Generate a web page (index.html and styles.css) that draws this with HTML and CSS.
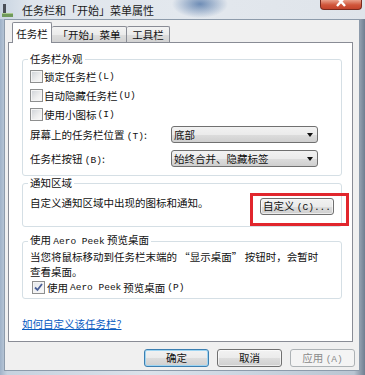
FILE: index.html
```html
<!DOCTYPE html>
<html lang="zh-CN">
<head>
  <meta charset="UTF-8" />
  <title>任务栏和「开始」菜单属性</title>
  <link rel="stylesheet" href="styles.css">
</head>
<body>

<div class="window">
  <div class="titlebar">
    <svg class="app-icon" width="11" height="13" viewBox="0 0 11 13">
      <rect x="1" y="0" width="3" height="10" fill="#4a4f57" />
      <rect x="0" y="9" width="11" height="4" fill="#6f9a5a" />
      <rect x="0" y="9" width="11" height="1" fill="#a9c98f" />
    </svg>
    <span class="title">任务栏和「开始」菜单属性</span>
    <div class="close">
      <svg width="42" height="10" viewBox="0 0 42 10">
        <path d="M17 -3 L25 6 M25 -3 L17 6" stroke="#fff" stroke-width="2.4" />
      </svg>
    </div>
  </div>

  <div class="client">
    <div class="tabs">
      <div class="tab active">任务栏</div>
      <div class="tab wide">「开始」菜单</div>
      <div class="tab last">工具栏</div>
    </div>

    <div class="panel">
      <fieldset class="group g1">
        <legend>任务栏外观</legend>
        <div class="check"><span class="cb"></span>锁定任务栏 <span class="lat">(L)</span></div>
        <div class="check"><span class="cb"></span>自动隐藏任务栏 <span class="lat">(U)</span></div>
        <div class="check"><span class="cb"></span>使用小图标 <span class="lat">(I)</span></div>
        <div class="field first">
          <span class="field-label">屏幕上的任务栏位置 <span class="lat">(T)</span>:</span>
          <div class="combo">底部<span class="arrow"></span></div>
        </div>
        <div class="field second">
          <span class="field-label">任务栏按钮 <span class="lat">(B)</span>:</span>
          <div class="combo">始终合并、隐藏标签<span class="arrow"></span></div>
        </div>
      </fieldset>

      <fieldset class="group g2">
        <legend>通知区域</legend>
        <div class="notify-row">
          <span class="notify-text">自定义通知区域中出现的图标和通知。</span>
          <div class="btn-wrap">
            <div class="btn custom">自定义 <span class="lat">(C)...</span></div>
            <div class="highlight"></div>
          </div>
        </div>
      </fieldset>

      <fieldset class="group g3">
        <legend>使用 <span class="lat">Aero Peek</span> 预览桌面</legend>
        <p class="peek-text">当您将鼠标移动到任务栏末端的 “显示桌面” 按钮时，会暂时<br>查看桌面。</p>
        <div class="check peek"><span class="cb checked">
          <svg width="11" height="11" viewBox="0 0 11 11"><path d="M2 5.5 L4.5 8 L9 2" fill="none" stroke="#4a5f97" stroke-width="1.8" /></svg>
        </span>使用 <span class="lat">Aero Peek</span> 预览桌面 <span class="lat">(P)</span></div>
      </fieldset>

      <a class="help" href="#">如何自定义该任务栏?</a>
    </div>

    <div class="buttons">
      <div class="btn default">确定</div>
      <div class="btn">取消</div>
      <div class="btn disabled">应用 <span class="lat">(A)</span></div>
    </div>
  </div>
</div>

</body>
</html>
```

FILE: styles.css
```css
body {
  margin: 0;
  width: 365px;
  height: 375px;
  overflow: hidden;
  font-family: "Noto Sans CJK SC", sans-serif;
  font-size: 10.5px;
  color: #111;
}
.lat {
  font-family: "Liberation Mono", monospace;
  font-size: 9.5px;
}

.window {
  height: 375px;
  display: flex;
  flex-direction: column;
  background: linear-gradient(to right, #9fb2c8 0%, #c6d2df 2%, #dbe2ea 40%, #cfd9e4 60%, #b9c5d2 97%, #6f7e90 100%);
}
.titlebar {
  height: 19px;
  flex-shrink: 0;
  display: flex;
  align-items: center;
  padding-left: 2px;
  background:
    radial-gradient(ellipse 28px 14px at 200px 4px, rgba(90, 125, 172, 0.85), rgba(90, 125, 172, 0) 100%),
    linear-gradient(to right, #c9d5e2 0%, #dfe5ec 8%, #e3e8ee 50%, #dfe4ea 100%);
}
.app-icon {
  margin-top: 1px;
}
.title {
  margin-left: 9px;
  font-size: 11px;
  line-height: 14px;
  color: #1a1a1a;
}
.close {
  margin-left: auto;
  margin-right: 3px;
  align-self: flex-start;
  width: 42px;
  height: 10px;
  box-sizing: border-box;
  border: 1px solid #7a2a1e;
  border-top: none;
  border-radius: 0 0 4px 4px;
  background: linear-gradient(#e9a08a, #d0553a 55%, #c3442c);
  overflow: hidden;
}
.close svg {
  display: block;
  margin-left: -1px;
}

.client {
  flex: 1;
  margin: 0 5px 4px 4px;
  border: 1px solid #8d9bab;
  background: #f0f0f0;
  display: flex;
  flex-direction: column;
  padding: 2px 6px 0 3px;
}

.tabs {
  height: 21px;
  display: flex;
  align-items: flex-end;
  padding-left: 4px;
  margin-bottom: -1px;
  position: relative;
  z-index: 1;
}
.tab {
  box-sizing: border-box;
  height: 16px;
  margin-bottom: 1px;
  border: 1px solid #898c95;
  border-bottom: none;
  border-radius: 2px 2px 0 0;
  background: linear-gradient(#f3f3f3, #ebebeb 50%, #dddddd 51%, #d2d2d2);
  text-align: center;
  line-height: 12px;
  padding-top: 2px;
}
.tab.active {
  width: 40px;
  height: 21px;
  margin-bottom: 0;
  background: #fff;
  padding-top: 5px;
}
.tab.wide {
  width: 75px;
  border-left: none;
}
.tab.last {
  width: 43px;
  border-left: none;
}

.panel {
  height: 300px;
  box-sizing: border-box;
  border: 1px solid #898c95;
  background: #fff;
  padding: 10px 10px 0 13px;
}

.group {
  margin: 0;
  min-width: 0;
  border: 1px solid #d5dfe5;
  border-radius: 3px;
  padding: 2px 7px 8px 7px;
}
.group legend {
  padding: 0 2px;
  margin-left: -2px;
  line-height: 12px;
}
.g2 {
  margin-top: 1px;
  padding-top: 9px;
  padding-bottom: 11px;
}
.g3 {
  margin-top: 7px;
  padding-top: 1px;
  padding-bottom: 1px;
}

.check {
  display: flex;
  align-items: center;
  gap: 1px;
  height: 19px;
  line-height: 12px;
}
.check.peek {
  margin-top: -1px;
  margin-left: 2px;
  gap: 2px;
}
.cb {
  width: 13px;
  height: 13px;
  box-sizing: border-box;
  flex-shrink: 0;
  border: 1px solid #8e8f8f;
  background: linear-gradient(135deg, #cdd1d6 0%, #eeeeee 60%, #fafafa 100%);
  box-shadow: inset 0 0 0 1px #f4f4f4;
}
.cb svg {
  display: block;
}
.cb.checked {
  background: linear-gradient(135deg, #e4e7eb 0%, #fafafa 100%);
}

.field {
  display: flex;
  align-items: center;
  height: 17px;
}
.field.first {
  margin-top: 2px;
}
.field.second {
  margin-top: 7px;
}
.field-label {
  width: 141px;
  flex-shrink: 0;
  line-height: 12px;
  padding-top: 3px;
}
.combo {
  width: 147px;
  height: 17px;
  box-sizing: border-box;
  border: 1px solid #707070;
  border-radius: 3px;
  background: linear-gradient(#f2f2f2, #ebebeb 50%, #dddddd 51%, #cfcfcf);
  display: flex;
  align-items: center;
  padding: 0 4px 0 2px;
  line-height: 12px;
}
.arrow {
  margin-left: auto;
  width: 0;
  height: 0;
  border-left: 3.5px solid transparent;
  border-right: 3.5px solid transparent;
  border-top: 4px solid #111;
}

.notify-row {
  display: flex;
  align-items: flex-start;
  justify-content: space-between;
}
.notify-text {
  line-height: 12px;
  margin-top: -1px;
}
.btn-wrap {
  position: relative;
}
.btn {
  box-sizing: border-box;
  width: 65px;
  height: 18px;
  border: 1px solid #707070;
  border-radius: 3px;
  background: linear-gradient(#f2f2f2, #ebebeb 50%, #dddddd 51%, #cfcfcf);
  box-shadow: inset 0 0 0 1px rgba(255, 255, 255, 0.6);
  text-align: center;
  line-height: 15px;
}
.btn.custom {
  width: 74px;
  height: 17px;
  line-height: 14px;
}
.highlight {
  position: absolute;
  left: -10px;
  top: -5px;
  right: -15px;
  bottom: -11px;
  border: 3px solid #e1262d;
}

.peek-text {
  margin: 0;
  line-height: 15px;
}

.help {
  display: inline-block;
  margin-top: 19px;
  line-height: 12px;
  color: #0a5cc2;
  text-decoration: underline;
}

.buttons {
  display: flex;
  justify-content: flex-end;
  gap: 8px;
  margin-top: 7px;
  margin-right: -2px;
}
.btn.default {
  border-color: #3c7fb1;
  box-shadow: inset 0 0 0 1px #9fd5f2;
}
.btn.disabled {
  border-color: #adb2b5;
  background: #f4f4f4;
  box-shadow: none;
  color: #8a8a8a;
}
```
